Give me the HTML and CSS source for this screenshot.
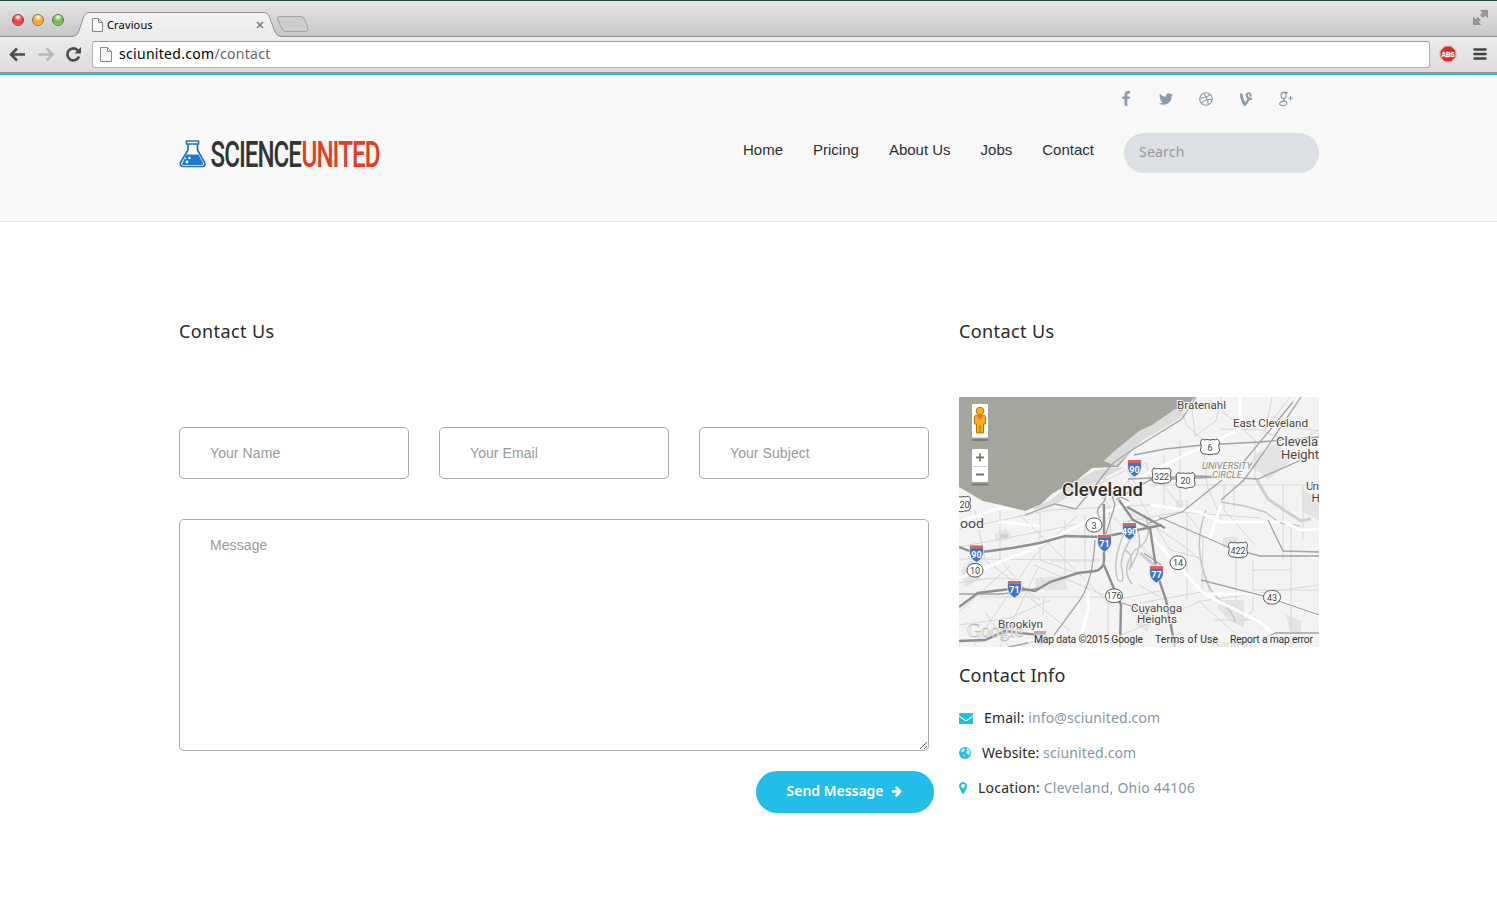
FILE: index.html
```html
<!DOCTYPE html>
<html lang="en">
<head>
<meta charset="utf-8">
<title>Cravious</title>
<link rel="stylesheet" href="styles.css">
</head>
<body>
<div class="browser">
  <div class="tabstrip">
    <div class="lights"><i class="light red"></i><i class="light amber"></i><i class="light green"></i></div>
    <div class="tab">
      <svg class="tab-shape" width="208" height="25" viewBox="0 0 208 25"><defs><linearGradient id="tg" x2="0" y2="1"><stop stop-color="#f3f3f3"/><stop offset="1" stop-color="#ebebeb"/></linearGradient></defs><path d="M0 25V24.500Q4 24 5.500 20L11 4Q12.500.5 16 .5H191Q194.500.5 196 4L202 20Q204 24 208 24.500V25Z" fill="url(#tg)"/><path d="M0 24.500Q4 24 5.500 20L11 4Q12.500.5 16 .5H191Q194.500.5 196 4L202 20Q204 24 208 24.500" fill="none" stroke="#929292"/></svg>
      <svg class="doc" width="11" height="14" viewBox="0 0 11 14"><path d="M.5.5H6.500L10.500 4.500V13.500H.5ZM6.500.5V4.500H10.500" fill="#fafafa" stroke="#888"/></svg>
      <span class="tab-title">Cravious</span>
      <svg class="tab-close" width="8" height="8" viewBox="0 0 8 8"><path d="M1 1L7 7M7 1L1 7" stroke="#777" stroke-width="1.500"/></svg>
    </div>
    <svg class="newtab" width="34" height="17" viewBox="0 0 34 17"><path d="M4 .5H25Q27.500.5 28.500 3L32 12.500Q32.500 15.500 29.500 15.500H10Q7 15.500 6 13L1.500 3Q1 .5 4 .5Z" fill="#cecece" stroke="#a2a2a2"/></svg>
    <svg class="expand" width="15" height="15" viewBox="0 0 15 15"><path d="M7.500.5H14.500V7.500L12.300 5.300L10 7.500L7.500 5L9.800 2.700ZM.5 7.500L2.700 9.700L5 7.500L7.500 10L5.300 12.300L7.500 14.500H.5Z" fill="#999" stroke="#808080" stroke-width=".6"/></svg>
  </div>
  <div class="toolbar">
    <svg class="nav-buttons" width="83" height="34" viewBox="0 0 83 34"><g fill="none" stroke-width="2.600"><path d="M25 17.500H12M17 11.500L11 17.500L17 23.500" stroke="#4c4c4c"/><path d="M38 17.500H51M46.500 11.500L52.500 17.500L46.500 23.500" stroke="#b9b9b9"/><path d="M78 13.500A6 6 0 1 0 79 19.500" stroke="#4c4c4c"/></g><path d="M81 10V16.500H74.500Z" fill="#4c4c4c"/></svg>
    <div class="address">
      <svg width="12" height="15" viewBox="0 0 12 15"><path d="M.5.5H7.500L11.500 4.500V14.500H.5ZM7.500.5V4.500H11.500" fill="#f6f6f6" stroke="#888"/></svg>
      <span class="url">sciunited.com<span class="path">/contact</span></span>
    </div>
    <svg class="abs" width="18" height="18" viewBox="0 0 18 18"><path d="M5.500.8H12.500L17.200 5.500V12.500L12.500 17.200H5.500L.8 12.500V5.500Z" fill="#fff" stroke="#c6c6c6"/><path d="M5.800 1.500H12.200L16.500 5.800V12.200L12.200 16.500H5.800L1.500 12.200V5.800Z" fill="#df2a1d"/><text x="2.500" y="11.500" font-size="7" font-weight="900" fill="#fff" stroke="#fff" stroke-width=".3" textLength="13" lengthAdjust="spacingAndGlyphs">ABS</text></svg>
    <svg class="menu" width="14" height="14" viewBox="0 0 14 14"><path d="M1.500 2.500H12.500M1.500 7H12.500M1.500 11.500H12.500" stroke="#444" stroke-width="2.600" stroke-linecap="round"/></svg>
  </div>
</div>

<header class="site-header">
  <div class="logo">
    <svg width="204" height="44" viewBox="0 -6 204 44">
      <path d="M7.500 3H19.500V6H7.500ZM9 6V12L1.500 24.500Q.5 28 4 28.500H23.500Q27 28 25.500 24.500L18.500 12V6" fill="#fff" stroke="#1d71c4" stroke-width="1.700" stroke-linejoin="round"/>
      <path d="M7.500 16.500H19.500L24 25Q24.500 27 22.500 27H4.500Q2.500 27 3.500 25Z" fill="#2079ce"/>
      <circle cx="10.500" cy="20" r="1.200" fill="#fff"/><circle cx="8" cy="24" r="1.400" fill="#fff"/><circle cx="6.500" cy="20.500" r=".7" fill="#fff"/>
      <g font-size="37.500" class="wordmark"><text x="31.500" y="29" textLength="90.500" lengthAdjust="spacingAndGlyphs" fill="#333">SCIENCE</text><text x="122.500" y="29" textLength="78" lengthAdjust="spacingAndGlyphs" fill="#e93c1c">UNITED</text></g>
    </svg>
  </div>
  <nav class="nav"><a>Home</a><a>Pricing</a><a>About Us</a><a>Jobs</a><a>Contact</a></nav>
  <div class="header-side">
    <div class="social">
      <svg viewBox="0 0 1792 1792"><path d="M1343 12v264h-157q-86 0-116 36t-30 108v189h293l-39 296h-254v759h-306v-759h-255v-296h255v-218q0-186 104-288.500t277-102.500q147 0 228 12z"/></svg>
      <svg viewBox="0 0 1792 1792"><path d="M1684 408q-67 98-162 167 1 14 1 42 0 130-38 259.500t-115.500 248.500-184.500 210.500-258 146-323 54.500q-271 0-496-145 35 4 78 4 225 0 401-138-105-2-188-64.500t-114-159.500q33 5 61 5 43 0 85-11-112-23-185.500-111.500t-73.500-205.500v-4q68 38 146 41-66-44-105-115t-39-154q0-88 44-163 121 149 294.500 238.500t371.500 99.500q-8-38-8-74 0-134 94.500-228.500t228.500-94.500q140 0 236 102 109-21 205-78-37 115-142 178 93-10 186-50z"/></svg>
      <svg class="line" viewBox="0 0 14 14"><circle cx="7" cy="7" r="5.500"/><path d="M4.900 1.900Q8 5.500 9.200 12M1.500 6.200Q7.500 6.200 10.600 3M3.200 10.900Q5.500 6.700 12.500 7.600"/></svg>
      <svg viewBox="0 0 14 14"><path d="M.8 1.500H3Q3.500 6.500 5.600 9.200Q6.800 7.800 7.500 6.200Q5.800 5 5.800 3Q6 .5 8.600.4Q11.200.5 11 3.500L10.700 4.600L9.100 4.300Q9.700 1.800 8.600 1.800Q7.700 2 7.800 3.300Q8.200 5.800 11.400 5.300V7Q10.300 7.500 9.300 7.200Q7.800 10.300 5.900 12.200Q5 12.800 4.100 11.800Q1.400 8 .8 1.500Z" transform="translate(.8 .6)"/></svg>
      <svg class="line" viewBox="0 0 14 14"><ellipse cx="4.900" cy="3.900" rx="2.200" ry="2.700"/><path d="M4.700 1.200H8.500L6.700 2M5.200 6.600Q3.800 7.800 5.400 8.400Q8 9.500 7.600 11Q7 12.900 4.300 12.800Q1.200 12.600 1.400 11Q1.700 9.100 5.600 8.800M11 4.300V8.300M9 6.300H13"/></svg>
    </div>
    <input class="search" placeholder="Search">
  </div>
</header>

<main class="content">
  <form class="form">
    <h3>Contact Us</h3>
    <div class="fields"><input class="field" placeholder="Your Name"><input class="field" placeholder="Your Email"><input class="field" placeholder="Your Subject"></div>
    <textarea class="field message" placeholder="Message"></textarea>
    <button type="button" class="send">Send Message<svg width="12" height="12" viewBox="0 0 1792 1792"><path fill="#fff" d="M1600 960q0 54-37 91l-651 651q-39 37-91 37-51 0-90-37l-75-75q-38-38-38-91t38-91l293-293h-704q-52 0-84.500-37.500t-32.500-90.500v-128q0-53 32.500-90.500t84.500-37.500h704l-293-294q-38-36-38-90t38-90l75-75q38-38 90-38 53 0 91 38l651 651q37 35 37 90z"/></svg></button>
  </form>
  <aside class="aside">
    <h3>Contact Us</h3>
    <svg class="map" width="360" height="250" viewBox="959 397 360 250">
      <defs>
        <g id="ishield"><path d="M-6.500-8H6.500L7-3Q7.500 5 0 9Q-7.500 5-7-3Z" fill="#3b75c4" stroke="#e8eef5" stroke-width=".8"/><path d="M-6.500-8H6.500V-5H-6.500Z" fill="#e0605a"/></g>
        <g id="us"><path d="M-7.500-8Q-5-6.500-3-7.500Q0-6.500 3-7.500Q5-6.500 7.500-8L9.500-5.500Q8 0 9.500 3Q9 7.500 4 7Q0 8.500-4 7Q-9 7.500-9.500 3Q-8 0-9.500-5.500Z" fill="#fff" stroke="#555"/></g>
      </defs>
      <path fill="#f3f3f3" d="M959 397h360v250H959z"/>
      <g fill="#e3e3e3"><path d="M1254 455L1278 442L1290 462L1268 480L1250 465ZM1222 600H1244V628L1228 620L1217 607ZM1035 578L1064 576L1068 590H1036ZM1223 537H1237V548H1223ZM1303 492L1319 496V520L1303 512ZM1286 614L1301 621V632H1290ZM995 534L1006 528L1013 538L996 542ZM1176 500H1183V510H1176ZM961 570L972 560L980 580L965 587ZM1139 609L1154 616L1147 632L1136 625Z"/></g>
      <g fill="none" stroke="#d6d6d6" stroke-width="1">
        <path d="M959 529L1050 510L1150 505M975 510L985 560L1040 600M1000 510V560L1036 602M1040 513V560L1082 575M1065 520V575M1085 515V570M959 547L1090 522M980 597H1108V640M1026 595L1069 630M1044 597L1043 615M959 612L1010 566M973 647L1035 555L1077 516M1000 647L1038 568M959 559L1100 560M1050 561H1095M1020 515L1110 605M1034 565L1115 600L1160 591M1140 603L1201 592M1119 636L1201 601L1319 585M1187 500V600M1202 595L1203 535M1236 545V600M1253 560V590H1319M1253 570H1290M1291 524V630M1253 590V610L1241 625M1163 485L1200 530M1180 400L1186 425L1203 440L1207 485L1222 520M1191 400L1195 436L1216 421L1221 397M1210 400L1255 440V480M1221 429L1265 430L1290 397M1272 397L1265 432L1296 444L1319 430M1278 426L1319 431M1150 485H1319M1180 440V500M1164 455V510M1224 485V510L1255 545M1234 485V510M1283 485V560M1303 485V540M959 625L1010 618L1050 600M985 612L1009 647M1122 522L1180 512L1260 518M1102 505L1165 570M1088 480L1109 505L1111 535M1198 600L1250 647M1214 620L1250 620M1139 585L1165 600M1130 513Q1180 540 1200 560L1212 600M1140 500L1170 550L1200 558M959 583Q1000 575 1015 580M1080 498L1105 478L1115 496M1092 488L1126 470L1140 490M1110 500L1146 462L1150 480"/>
      </g>
      <g fill="none" stroke="#c4c4c4" stroke-width="1.500"><path d="M1206 510Q1195 540 1202 565Q1207 590 1220 600Q1234 613 1235 622M1130 520Q1110 560 1118 580Q1125 585 1122 570Q1118 555 1137 530Q1145 545 1129 570Q1135 555 1125 550M1145 515Q1155 540 1135 550Q1120 570 1132 584M1221 502L1245 506L1265 512L1280 523L1300 526"/></g>
      <g fill="none" stroke="#fff" stroke-width="3"><path d="M959 578L1030 550L1105 512L1129 503M1150 535L1204 594L1260 622L1275 635M1205 594H1260L1319 615M1151 505L1199 512L1221 522L1280 522M1139 477L1240 429V397M1221 505L1209 540M1088 592V610L1080 640M959 522L995 509L1050 506M1283 521L1300 530L1319 529M999 522L1040 526"/></g>
      <path d="M959 397H1195L1182 411L1138 443L1118 467L1092 468L1076 481L1053 493L1040 505L1025 511L1001 505L983 501L959 487Z" fill="#a4a69e"/>
      <path d="M1180 411L1175 409L1152 425L1139 431L1112 453L1104 461L1116 466L1143 440L1184 416ZM1125 467L1096 470L1071 484L1051 500L1034 507V510L1050 507L1089 486Z" fill="#dcdcdc"/>
      <g fill="none" stroke="#a3a3a3" stroke-width="1.300">
        <path d="M1025 515L1055 504L1076 509L1090 492L1113 463L1132 450L1182 419L1196 397M1129 501L1111 492L1115 505L1104 540M1134 455L1165 449L1203 445L1260 442L1319 437M1128 479L1200 476L1258 479L1310 456M1116 500L1150 480L1220 477M1301 397L1262 455L1244 480L1221 500M1293 402L1241 465M1149 523L1182 512L1222 480M1100 518Q1094 510 1103 503Q1110 493 1098 490M1095 540Q1093 580 1080 600L1052 638L1009 647M1159 517Q1200 535 1230 548L1260 556H1319M1268 520L1283 551L1319 552M1201 580L1264 596L1319 615M1260 641L1275 633H1319M1113 600L1134 607L1153 623M959 594L1002 594L1040 588M1161 565L1144 553"/>
      </g>
      <g fill="none" stroke="#8f8f8f" stroke-width="2.400">
        <path d="M959 547L975 553L1012 548L1040 543L1065 536L1103 537L1162 525M1104 504V560Q1104 569 1095 571L1078 573L1050 582L1035 591L1018 588L978 593L959 607M1104 565L1112 584L1121 605L1120 647M1119 500L1133 520L1150 528L1157 574L1166 600L1175 647M1127 507L1165 528M959 641L985 640L1005 631L1037 635"/>
      </g>
      <path d="M1257 480L1268 499L1287 512L1301 521L1311 519M1140 553L1160 570M1000 536H1008" stroke="#cecece" stroke-width="3" fill="none"/>
      <use href="#ishield" x="1134.500" y="468"/><use href="#ishield" x="1129.500" y="531"/><use href="#ishield" x="1104.500" y="543"/><use href="#ishield" x="976.500" y="553.500"/><use href="#ishield" x="1014.500" y="589"/><use href="#ishield" x="1156.500" y="574"/>
      <use href="#us" x="1210" y="447"/><use href="#us" x="1161.500" y="476"/><use href="#us" x="1185.500" y="480.500"/><use href="#us" x="1238" y="550"/><use href="#us" x="961" y="504"/>
      <g fill="#fff" stroke="#555"><rect x="1086" y="518" width="16" height="14" rx="7"/><rect x="967" y="563.500" width="16" height="13.500" rx="7"/><rect x="1170" y="556" width="16" height="13.500" rx="7"/><rect x="1105.500" y="589" width="17" height="13.500" rx="7"/><rect x="1263.500" y="590.500" width="17" height="13.500" rx="7"/></g>
      <g class="shield-no"><text x="1134.500" y="472.500">90</text><text x="1129.500" y="535">490</text><text x="1104.500" y="547">71</text><text x="976.500" y="557.500">90</text><text x="1014.500" y="593">71</text><text x="1156.500" y="578">77</text></g>
      <g class="route-no"><text x="1210" y="450.500">6</text><text x="1161.500" y="479.500">322</text><text x="1185.500" y="483.500">20</text><text x="1238" y="553.500">422</text><text x="964.500" y="507.500">20</text><text x="1094" y="528.500">3</text><text x="975" y="573.500">10</text><text x="1178" y="566">14</text><text x="1114" y="599">176</text><text x="1272" y="600.500">43</text></g>
      <g class="place">
        <text x="1062" y="495.500" class="city" textLength="81" lengthAdjust="spacingAndGlyphs">Cleveland</text>
        <text x="1177" y="409" textLength="49">Bratenahl</text><text x="1233" y="427" textLength="75">East Cleveland</text>
        <g font-size="12.500"><text x="1276" y="446" textLength="42" lengthAdjust="spacingAndGlyphs">Clevela</text><text x="1281" y="459" textLength="38" lengthAdjust="spacingAndGlyphs">Height</text><text x="960" y="528" textLength="24" lengthAdjust="spacingAndGlyphs">ood</text></g>
        <text x="1306" y="490" textLength="13">Un</text><text x="1311.500" y="502" textLength="7.500">H</text>
        <text x="1131" y="612" textLength="51">Cuyahoga</text><text x="1137" y="623" textLength="40">Heights</text><text x="998" y="628" textLength="45">Brooklyn</text><text x="1212" y="648" textLength="40" opacity=".45">Garfield</text>
        <g class="district"><text x="1202" y="469" textLength="50">UNIVERSITY</text><text x="1212" y="478" textLength="30">CIRCLE</text></g>
      </g>
      <text x="967" y="637" class="google" textLength="56">Google</text>
      <path d="M1034 631H1046V634H1034Z" fill="#e69a96"/><path d="M1034 634H1046Q1046 643 1040 647Q1034 643 1034 634Z" fill="#b5cdeb"/>
      <path d="M1028 635H1319V647H1028Z" fill="#f5f5f5" opacity=".65"/>
      <g class="legal"><text x="1034" y="643" textLength="109">Map data ©2015 Google</text><text x="1155" y="643" textLength="63">Terms of Use</text><text x="1230" y="643" textLength="83">Report a map error</text></g>
      <path d="M971.500 440H988.500M971.500 484.500H988.500" stroke="#000" stroke-opacity=".25" stroke-width="2"/>
      <g fill="#fff" stroke="#8c8e86" stroke-width=".7"><rect x="971.500" y="403.500" width="17" height="34.500" rx="1.500"/><rect x="971.500" y="448.500" width="17" height="34" rx="1.500"/></g>
      <path d="M973 466.500H987" stroke="#ccc"/><path d="M976 457.500H984M980 453.500V461.500M976 474.500H984" stroke="#777" stroke-width="1.800"/>
      <path d="M974.500 418Q974.500 415 977 415H983Q985.500 415 985.500 418V424H983.500V433H976.500V424H974.500Z" fill="#f8b111" stroke="#bc7209"/><path d="M980 425V433" stroke="#bc7209"/><path d="M976.500 415.500H983.500L980 420Z" fill="#ee6a55"/><circle cx="980" cy="411" r="3.800" fill="#f8b111" stroke="#bc7209"/>
    </svg>
    <h3 class="info-title">Contact Info</h3>
    <ul class="info">
      <li><svg width="14" height="14" viewBox="0 0 1792 1792"><path d="M1792 710v794q0 66-47 113t-113 47h-1472q-66 0-113-47t-47-113v-794q44 49 101 87 362 246 497 345 57 42 92.500 65.500t94.500 48 110 24.500h2q51 0 110-24.500t94.500-48 92.500-65.500q170-123 498-345 57-39 100-87zm0-294q0 79-49 151t-122 123q-376 261-468 325-10 7-42.500 30.500t-54 38-52 32.500-57.500 27-50 9h-2q-23 0-50-9t-57.500-27-52-32.500-54-38-42.500-30.500q-91-64-262-182.500t-205-142.500q-62-42-117-115.500t-55-136.500q0-78 41.500-130t118.500-52h1472q65 0 112.500 47t47.500 113z"/></svg><span>Email: <a>info@sciunited.com</a></span></li>
      <li><svg width="12" height="14" viewBox="0 0 12 14"><circle cx="6" cy="7" r="6"/><path d="M2 4.500L4 2.800L6.200 2.500L5.200 4L6 5L4.600 5.600L3.500 5.800L3 6.600L2 6ZM8 2L10 3.500L11 6L10.300 8.500L9.200 9.800L8.600 7.800L7.400 7.200L7.200 5.800L8.500 4.500L7.400 3.500ZM4 8.500L5.800 9.300L5.300 11.500Z" fill="#fff" opacity=".85"/></svg><span>Website: <a>sciunited.com</a></span></li>
      <li><svg width="8" height="14" viewBox="384 0 1024 1792"><path d="M1152 640q0-106-75-181t-181-75-181 75-75 181 75 181 181 75 181-75 75-181zm256 0q0 109-33 179l-364 774q-16 33-47.500 52t-67.500 19-67.500-19-46.500-52l-365-774q-33-70-33-179 0-212 150-362t362-150 362 150 150 362z"/></svg><span class="location">Location: <a>Cleveland, Ohio 44106</a></span></li>
    </ul>
  </aside>
</main>
</body>
</html>
```

FILE: styles.css
```css
* { box-sizing: border-box; }
body { margin: 0; background: #fff; color: #2a2a2a; font-family: "Noto Sans", sans-serif; height: 922px; overflow: hidden; }
svg { flex: none; display: block; }

.browser { height: 73px; border-bottom: 1px solid #929292; background: #e8e8e8; }
.tabstrip { height: 37px; display: flex; align-items: flex-start; border-top: 1px solid #1f4c3f; background: linear-gradient(#e6e6e6, #c6c6c6); box-shadow: inset 0 -1px #929292; }
.lights { width: 73px; display: flex; gap: 8px; padding: 13px 0 0 12px; }
.light { width: 12px; height: 12px; border-radius: 50%; border: 1px solid; }
.red { background: radial-gradient(circle at 50% 20%, #fff 0, #f0655f 35%, #e33a3a 60%, #f58a80); border-color: #9c3a36; }
.amber { background: radial-gradient(circle at 50% 20%, #fff 0, #f4bb4d 35%, #efa02c 60%, #ffe27a); border-color: #a06c2c; }
.green { background: radial-gradient(circle at 50% 20%, #fff 0, #8ccc66 35%, #6cb544 60%, #b9ee8c); border-color: #4f7f3b; }
.tab { position: relative; width: 208px; height: 25px; margin-top: 11px; display: flex; align-items: center; padding: 0 17px 0 19px; }
.tab-shape { position: absolute; left: 0; top: 0; }
.doc, .tab-title, .tab-close { position: relative; }
.tab-title { flex: 1; margin-left: 4px; font-size: 11px; letter-spacing: .15px; color: #000; }
.newtab { margin: 15px 0 0 -5px; }
.expand { margin: 9px 9px 0 auto; }
.toolbar { height: 35px; padding-bottom: 1px; display: flex; align-items: center; background: linear-gradient(#ececec, #dcdcdc); }
.nav-buttons { margin-right: 9px; }
.address { width: 1338px; height: 27px; display: flex; align-items: center; gap: 7px; padding-left: 7px; border: 1px solid #b0b0b0; border-top-color: #999; border-radius: 3px; background: #fff; }
.url { font-size: 14px; line-height: 20px; color: #000; letter-spacing: .3px; }
.path { color: #666; }
.abs { margin-left: 9px; font-family: "Liberation Sans", sans-serif; }
.menu { margin-left: 16px; }

.site-header { height: 149px; display: flex; padding-left: 179px; border-top: 2px solid #22bde7; border-bottom: 1px solid #e5e5e5; background: #f8f8f8; }
.logo { width: 564px; padding-top: 57px; }
.wordmark { font-family: Roboto, sans-serif; font-weight: 500; letter-spacing: -1.5px; }
.nav { width: 381px; display: flex; gap: 30px; padding-top: 65px; font: 15px/20px "Liberation Sans", sans-serif; color: #2f2f2f; white-space: nowrap; }
.header-side { padding-top: 16px; }
.social { display: flex; gap: 24px; margin-left: -6px; }
.social svg { width: 16px; height: 16px; fill: #8b9bad; }
.social .line { fill: none; stroke: #8b9bad; stroke-width: 1; }
.search { width: 195px; height: 40px; margin-top: 26px; padding: 0 15px 3px; border: 0; border-radius: 20px; background: #dcdfe4; font: 14px "Noto Sans", sans-serif; letter-spacing: .2px; display: block; }
input::placeholder, textarea::placeholder { color: #999; opacity: 1; }

.content { display: grid; grid-template-columns: 750px 360px; gap: 30px; padding: 99px 0 0 179px; }
h3 { margin: 0; font-size: 18px; line-height: 20px; font-weight: 400; letter-spacing: .4px; }
.form { display: flex; flex-direction: column; }
.fields { display: flex; gap: 30px; margin-top: 86px; }
.field { width: 230px; height: 52px; padding: 0 30px; border: 1px solid #aaa; border-radius: 5px; background: #fff; font: 14px "Liberation Sans", sans-serif; letter-spacing: .08px; }
.message { width: 750px; height: 232px; margin-top: 40px; padding: 17px 30px; resize: both; }
.send { align-self: flex-end; width: 178px; height: 42px; margin: 20px -5px 0 0; padding: 0 0 3px; display: flex; align-items: center; justify-content: center; gap: 8px; border: 0; border-radius: 21px; background: #22bee8; color: #fff; font: 600 14px "Noto Sans", sans-serif; letter-spacing: -.05px; }
.map { margin-top: 56px; }
.info-title { margin-top: 18px; letter-spacing: .2px; }
.info { margin: 15px 0 0; padding: 0; list-style: none; }
.info li { height: 35px; display: flex; align-items: center; gap: 11px; font-size: 14px; letter-spacing: .13px; white-space: nowrap; }
.info svg { fill: #22bee8; }
.info a { color: #8695a5; }
.location { letter-spacing: .22px; }

.shield-no { font: bold 9px Roboto, sans-serif; fill: #fff; text-anchor: middle; }
.route-no { font: 9px Roboto, sans-serif; fill: #444; text-anchor: middle; }
.place { font-family: Roboto, sans-serif; font-size: 11.7px; fill: #4c463c; paint-order: stroke; stroke: #f6f6f6; stroke-width: 2px; }
.city { font-size: 19px; font-weight: 500; fill: #322d25; }
.district { font-size: 9.5px; font-style: italic; fill: #8a8478; }
.google { font: 19px "Liberation Serif", serif; fill: #fff; stroke: #aaa; stroke-width: .5px; }
.legal { font: 10.3px Roboto, sans-serif; fill: #333; }
```
